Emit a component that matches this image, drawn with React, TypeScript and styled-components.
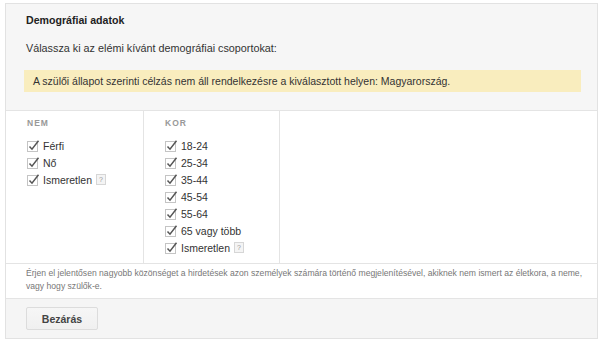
import React from 'react';
import styled, { createGlobalStyle } from 'styled-components';

const GlobalStyle = createGlobalStyle`
  html, body {
    margin: 0;
    padding: 0;
    background: #fff;
  }
  body {
    font-family: 'Liberation Sans', Arial, sans-serif;
    color: #222;
  }
`;

const Page = styled.div`
  width: 606px;
  height: 341px;
  padding: 3px 8px 0 5px;
  box-sizing: border-box;
`;

const Panel = styled.div`
  border: 1px solid #e2e2e2;
  display: flex;
  flex-direction: column;
`;

const Header = styled.div`
  background: #f6f6f6;
  padding: 8px 16px 18px 20px;
  border-bottom: 1px solid #e4e4e4;
`;

const Title = styled.div`
  font-size: 10.6px;
  font-weight: bold;
  line-height: 16px;
  color: #222;
`;

const Intro = styled.div`
  font-size: 10.8px;
  line-height: 16px;
  margin-top: 12px;
  color: #333;
`;

const Notice = styled.div`
  margin: 14px 0 0 -2px;
  height: 22px;
  padding-left: 9px;
  background: #f9edbe;
  font-size: 10.5px;
  line-height: 22px;
  color: #333;
`;

const Columns = styled.div`
  display: flex;
  height: 152px;
  background: #fff;
  border-bottom: 1px solid #e4e4e4;
`;

const Column = styled.div<{ $width?: number }>`
  width: ${p => (p.$width ? `${p.$width}px` : 'auto')};
  flex: ${p => (p.$width ? 'none' : '1')};
  border-right: ${p => (p.$width ? '1px solid #e4e4e4' : 'none')};
  padding: 6px 0 0 21px;
  box-sizing: border-box;
`;

const GroupLabel = styled.div`
  font-size: 8.5px;
  font-weight: bold;
  letter-spacing: 1px;
  color: #999;
  line-height: 12px;
  margin-bottom: 8px;
`;

const Row = styled.label`
  display: flex;
  align-items: center;
  height: 17px;
  font-size: 10.5px;
  color: #333;
`;

const Box = styled.span`
  width: 15px;
  height: 13px;
  margin-right: 1px;
  display: inline-flex;
`;

const Help = styled.span`
  display: inline-flex;
  align-items: center;
  justify-content: center;
  width: 8px;
  height: 9px;
  margin-left: 4px;
  border: 1px solid #d6d6d6;
  background: #f4f4f4;
  color: #999;
  font-size: 7px;
  line-height: 9px;
`;

const Note = styled.div`
  font-size: 8.6px;
  line-height: 13px;
  color: #777;
  padding: 3px 8px 5px 20px;
  background: #fff;
  border-bottom: 1px solid #e4e4e4;
`;

const Footer = styled.div`
  background: #f5f5f5;
  padding: 8px 20px 8px 20px;
`;

const Button = styled.button`
  width: 72px;
  height: 23px;
  border: 1px solid #dcdcdc;
  border-radius: 2px;
  background: linear-gradient(#f6f6f6, #f0f0f0);
  font-family: 'Liberation Sans', Arial, sans-serif;
  font-size: 10.5px;
  font-weight: bold;
  color: #444;
  padding: 0;
`;

const Check: React.FC = () => (
  <Box>
    <svg width="15" height="13" viewBox="0 0 15 13">
      <rect x="0.5" y="2.5" width="10" height="10" fill="#fff" stroke="#c4c4c4" />
      <path d="M2.5 7.5 L5 10.2 L11.5 1.8" fill="none" stroke="#555" strokeWidth="1.5" />
    </svg>
  </Box>
);

type Item = { label: string; help?: boolean };

const gender: Item[] = [{ label: 'Férfi' }, { label: 'Nő' }, { label: 'Ismeretlen', help: true }];
const age: Item[] = [
  { label: '18-24' },
  { label: '25-34' },
  { label: '35-44' },
  { label: '45-54' },
  { label: '55-64' },
  { label: '65 vagy több' },
  { label: 'Ismeretlen', help: true },
];

const Group: React.FC<{ title: string; items: Item[]; width?: number }> = ({ title, items, width }) => (
  <Column $width={width}>
    <GroupLabel>{title}</GroupLabel>
    {items.map(item => (
      <Row key={item.label}>
        <Check />
        {item.label}
        {item.help && <Help>?</Help>}
      </Row>
    ))}
  </Column>
);

export default function App() {
  return (
    <Page>
      <GlobalStyle />
      <Panel>
        <Header>
          <Title>Demográfiai adatok</Title>
          <Intro>Válassza ki az elémi kívánt demográfiai csoportokat:</Intro>
          <Notice>A szülői állapot szerinti célzás nem áll rendelkezésre a kiválasztott helyen: Magyarország.</Notice>
        </Header>
        <Columns>
          <Group title="NEM" items={gender} width={138} />
          <Group title="KOR" items={age} width={136} />
          <Column />
        </Columns>
        <Note>
          Érjen el jelentősen nagyobb közönséget a hirdetések azon személyek számára történő megjelenítésével, akiknek nem ismert az életkora, a neme, vagy hogy szülők-e.
        </Note>
        <Footer>
          <Button>Bezárás</Button>
        </Footer>
      </Panel>
    </Page>
  );
}
